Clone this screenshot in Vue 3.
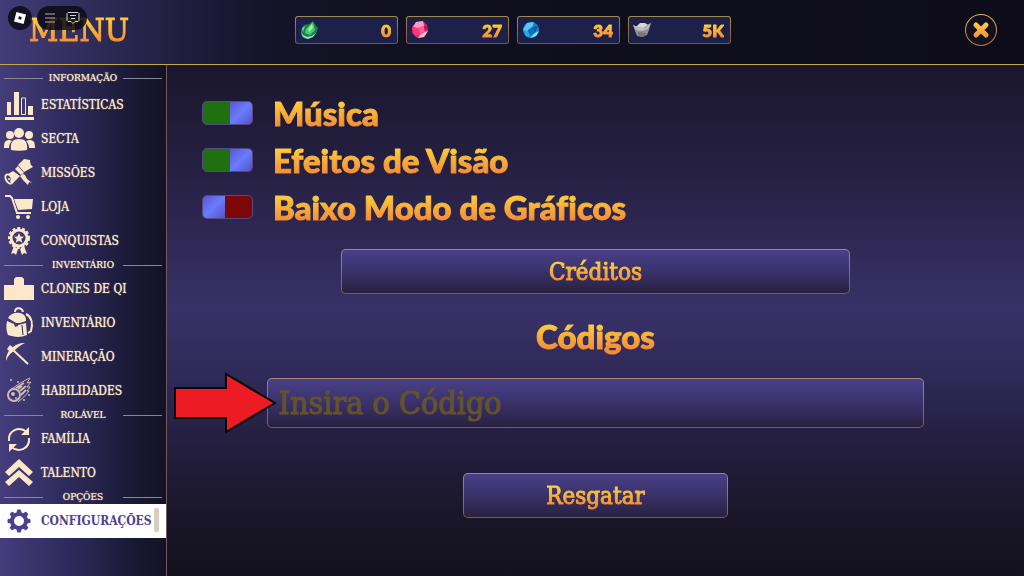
<template>
  <div class="game-menu">
    <header class="topbar">
      <h1 class="title gold">MENU</h1>

      <ul class="currencies">
        <li v-for="c in currencies" :key="c.id" class="currency">
          <svg v-if="c.id === 'jade'" width="20" height="20" viewBox="0 0 20 20">
            <path d="M2 10l3-5 5-1 4-3 3 5 2 2-2 6-5 4-6 1-4-4z" fill="#1c7f55" />
            <path d="M7 9l7-7 2 8-5 5-5-2z" fill="#3fce6d" />
            <path d="M9 9l4-5 1 4-4 4z" fill="#a8f58d" />
            <path d="M2 12l2 3 4 2 5-1 4-3-3 4-5 2-5-2z" fill="#a5e0c9" />
            <path d="M3 8l3-2-2 6z" fill="#69d6a4" />
          </svg>
          <svg v-else-if="c.id === 'ruby'" width="20" height="20" viewBox="0 0 20 20">
            <path d="M6 2l7-1 4 4 1 6-4 6-7 1-5-5V7z" fill="#e0246d" />
            <path d="M6 2l7-1 1 5-6 2-5-1z" fill="#ff9dbd" />
            <path d="M8 8l6-2 1 6-5 3z" fill="#ff5b93" />
            <path d="M2 8h6l2 7-5 1z" fill="#f43c7e" />
            <path d="M10 15l5-3 3-1-4 6-6 1z" fill="#ffc0d2" />
            <path d="M14 6l4 1-3 4z" fill="#b80f51" />
          </svg>
          <svg v-else-if="c.id === 'sapphire'" width="20" height="20" viewBox="0 0 20 20">
            <circle cx="10" cy="10" r="8" fill="#1686cf" />
            <path d="M6 3l7-1-2 6-5 3-4-1z" fill="#59c8f5" />
            <path d="M11 7l6-1-3 7z" fill="#0b5ba6" />
            <path d="M2 10l5 1 2 6-4-1z" fill="#2aa9ea" />
            <path d="M9 18l5-5 4-2-3 5z" fill="#8fe0ff" />
            <path d="M7 10l4-3 2 6-4 2z" fill="#0f6ebc" />
          </svg>
          <svg v-else width="20" height="20" viewBox="0 0 20 20">
            <path d="M1 5l5 2 8-2 5-2-2 7-2 5-5 2-5-1-2-5z" fill="#8f8f92" />
            <path d="M4 7l4-4h5l3 2-5 3z" fill="#d9d7d2" />
            <path d="M1 5l6 3h6l6-5-3 6-6 2-6-1z" fill="#bdbcbc" />
            <path d="M6 12l8 1-1 3-4 1-3-2z" fill="#77777b" />
          </svg>
          <span class="amount gold">{{ c.amount }}</span>
        </li>
      </ul>

      <button class="close" type="button" aria-label="Fechar">
        <svg width="18" height="18" viewBox="0 0 18 18">
          <defs>
            <linearGradient id="closeFill" gradientUnits="userSpaceOnUse" x1="0" y1="0" x2="0" y2="18">
              <stop offset="0" stop-color="#ffd24a" />
              <stop offset="1" stop-color="#f58a3a" />
            </linearGradient>
          </defs>
          <path d="M4 4l10 10M14 4L4 14" stroke="url(#closeFill)" stroke-width="5" stroke-linecap="round" />
        </svg>
      </button>

      <!-- platform buttons float over the title -->
      <div class="platform">
        <button class="platform-logo" type="button" aria-label="Roblox">
          <svg width="14" height="14" viewBox="0 0 14 14">
            <path fill-rule="evenodd" d="M3.4 1L13 3.4 10.6 13 1 10.600zM5.900 5.300L5.300 8.100 8.100 8.700 8.700 5.900z" fill="#fff" />
          </svg>
        </button>
        <div class="platform-pill">
          <button type="button" aria-label="Menu">
            <svg width="12" height="12" viewBox="0 0 12 12">
              <path d="M1 2h10M1 6h10M1 10h10" stroke="#b4adb0" />
            </svg>
          </button>
          <button type="button" aria-label="Chat">
            <svg width="14" height="14" viewBox="0 0 14 14" fill="none" stroke="#d6d0d2">
              <path d="M2 1.500h10l1 1v7l-1 1H9l-2 2-2-2H2l-1-1v-7z" />
              <path d="M4 4.500h6M5 7.500h4" />
            </svg>
          </button>
        </div>
      </div>
    </header>

    <nav class="sidebar">
      <section v-for="group in groups" :key="group.label" class="group">
        <h2>{{ group.label }}</h2>
        <a
          v-for="item in group.items"
          :key="item.icon"
          href="#"
          class="item"
          :class="{ active: active === item.icon }"
          @click.prevent="active = item.icon"
        >
          <svg class="icon" viewBox="0 0 32 32">
            <g v-if="item.icon === 'stats'">
              <path d="M4 13h4v13H4zM11 3h5v23h-5zM25 17h5v9h-5zM2 28h29v3H2z" />
              <path d="M18.500 9h4v16.500h-4z" class="line" />
            </g>
            <g v-else-if="item.icon === 'sect'">
              <circle cx="16" cy="10" r="5" />
              <circle cx="7" cy="12" r="4" />
              <circle cx="26" cy="12" r="4" />
              <path d="M8 27c-1-8 2-11 8-11s9 3 8 11c-5 1-11 1-16 0z" />
              <path d="M1 25c0-6 1-8 6-8l2 1c-2 2-3 4-3 7zM32 25c0-6-1-8-6-8l-3 1c2 2 3 4 3 7z" />
            </g>
            <g v-else-if="item.icon === 'missions'">
              <path d="M21 2l6 1c0 4 1 5 3 7l-9 5-6-7z" />
              <path d="M15 9l6 7-3 2-6-6z" />
              <path d="M10 14l7 5-7 7-3-1 1-5-3-3z" />
              <path d="M20 17l2 1 2 4 5 4-3-1-1 3-5-5-3-4z" />
              <ellipse cx="6" cy="22" rx="3" ry="5" class="line" stroke-width="2" transform="rotate(-30 6 22)" />
              <circle cx="6" cy="22" r="1" />
            </g>
            <g v-else-if="item.icon === 'shop'">
              <path d="M2 5h5l2 2 5 15h14" class="stroke" />
              <path d="M11 8h19l-1 10-14 1z" />
              <circle cx="15" cy="26" r="2" />
              <circle cx="25" cy="26" r="2" />
            </g>
            <g v-else-if="item.icon === 'awards'">
              <path d="M11 21l4 3-2 6-2-2-3 1zM21 21l-4 3 2 6 2-2 3 1z" />
              <circle cx="16" cy="13" r="10" fill="none" stroke="currentColor" stroke-width="2" stroke-dasharray="3 2" />
              <circle cx="16" cy="13" r="8" fill="none" stroke="currentColor" stroke-width="3" />
              <path d="M16 8l1.500 3.500 3.500.3-2.700 2.300.9 3.600L16 15.800l-3.200 1.900.9-3.600L11 11.800l3.500-.3z" />
            </g>
            <g v-else-if="item.icon === 'clones'">
              <path d="M1 12h10V6l2-2h6l2 2v6h10v15H1z" />
            </g>
            <g v-else-if="item.icon === 'bag'">
              <path d="M12 5c0-5 7-5 8 0" class="line" stroke-width="2" />
              <path d="M5 11c2-4 7-6 12-5 4 1 6 3 6 8l-6 2-4 0z" />
              <path d="M4 14l7 3 1 3 3-1v-1l8-2 1 12c-7 3-13 2-19 0-2-5-2-9-1-14z" />
              <path d="M23 7c6 3 7 10 5 17l-3 2" class="line" stroke-width="2" />
              <path d="M19 18l1 10" stroke="#2e2a5c" />
            </g>
            <g v-else-if="item.icon === 'mining'">
              <path d="M10 9l15 14" class="stroke" />
              <path d="M22 2C16 2 12 4 9 7 5 10 3 14 3 20c2-5 4-8 8-10 3-3 6-6 11-8z" />
              <path d="M7 4l5 4-4 4-4-4z" />
            </g>
            <g v-else-if="item.icon === 'skills'" class="faint">
              <path d="M7 15C16 9 20 6 27 3l-3 5 4-1-4 5h3l-3 4h2c-3 4-7 8-11 11" class="line" />
              <circle cx="11" cy="20" r="6" class="line" stroke-width="2" />
              <circle cx="10" cy="19" r="2" />
              <circle cx="13" cy="23" r="1" />
              <path d="M13 13l8-5M17 16l6-5M18 20l5-5M15 14l4-3" class="line" stroke-width="2" />
              <circle cx="8" cy="5" r="1" />
              <circle cx="15" cy="7" r="1" />
              <circle cx="26" cy="20" r="1" />
              <circle cx="21" cy="25" r="1" />
            </g>
            <g v-else-if="item.icon === 'family'">
              <path d="M6 18C5 7 16 3 24 9M26 15c1 11-10 15-18 9" class="stroke" />
              <path d="M26 4v8h-8zM6 29v-8h8z" />
            </g>
            <g v-else-if="item.icon === 'talent'">
              <path d="M16 2l14 13-4 4-10-9-10 9-4-4z" />
              <path d="M16 13l14 12-4 4-10-9-10 9-4-4z" />
            </g>
            <g v-else>
              <circle cx="16" cy="16" r="7" fill="none" stroke="currentColor" stroke-width="4" />
              <path
                v-for="n in 8"
                :key="n"
                d="M14 8l.5-3h3l.5 3z"
                stroke="currentColor"
                stroke-linejoin="round"
                :transform="`rotate(${n * 45} 16 16)`"
              />
            </g>
          </svg>
          <span>{{ item.label }}</span>
        </a>
      </section>
      <span class="scroll-thumb"></span>
    </nav>

    <main class="settings">
      <div class="toggles">
        <label v-for="t in toggles" :key="t.label" class="toggle">
          <input v-model="t.on" type="checkbox" />
          <span class="heading gold">{{ t.label }}</span>
        </label>
      </div>

      <button class="panel credits" type="button"><span class="gold">Créditos</span></button>

      <label class="heading codes" for="code"><span class="gold">Códigos</span></label>
      <div class="code-row">
        <input id="code" v-model="code" class="panel" type="text" placeholder="Insira o Código" />
        <svg class="arrow" width="104" height="64" viewBox="0 0 104 64">
          <path d="M2 17h51V3l49 29-49 29V47H2z" fill="#ed1c24" stroke="#0c0508" stroke-width="2" />
        </svg>
      </div>

      <button class="panel redeem" type="button"><span class="gold">Resgatar</span></button>
    </main>
  </div>
</template>

<script setup>
import { ref } from 'vue';

const active = ref('settings');
const code = ref('');

const currencies = [
  { id: 'jade', amount: '0' },
  { id: 'ruby', amount: '27' },
  { id: 'sapphire', amount: '34' },
  { id: 'silver', amount: '5K' },
];

const toggles = ref([
  { label: 'Música', on: true },
  { label: 'Efeitos de Visão', on: true },
  { label: 'Baixo Modo de Gráficos', on: false },
]);

const groups = [
  {
    label: 'INFORMAÇÃO',
    items: [
      { icon: 'stats', label: 'ESTATÍSTICAS' },
      { icon: 'sect', label: 'SECTA' },
      { icon: 'missions', label: 'MISSÕES' },
      { icon: 'shop', label: 'LOJA' },
      { icon: 'awards', label: 'CONQUISTAS' },
    ],
  },
  {
    label: 'INVENTÁRIO',
    items: [
      { icon: 'clones', label: 'CLONES DE QI' },
      { icon: 'bag', label: 'INVENTÁRIO' },
      { icon: 'mining', label: 'MINERAÇÃO' },
      { icon: 'skills', label: 'HABILIDADES' },
    ],
  },
  {
    label: 'ROLÁVEL',
    items: [
      { icon: 'family', label: 'FAMÍLIA' },
      { icon: 'talent', label: 'TALENTO' },
    ],
  },
  {
    label: 'OPÇÕES',
    items: [{ icon: 'settings', label: 'CONFIGURAÇÕES' }],
  },
];
</script>

<style>
body {
  margin: 0;
  background: #14111f;
}
</style>

<style scoped>
.game-menu {
  display: grid;
  grid-template-columns: 167px 1fr;
  grid-template-rows: 65px 1fr;
  min-height: 100vh;
  font-family: 'DejaVu Serif Condensed', 'DejaVu Serif', 'Liberation Serif', serif;
  font-variant-ligatures: none;
  color: #fbe8c8;
}

button {
  padding: 0;
  border: 0;
  background: none;
  font-family: inherit;
  cursor: pointer;
}

/* the transparent stroke thickens the clipped gradient */
.gold {
  color: transparent;
  background: linear-gradient(#ffd43a 15%, #f58b38 85%);
  -webkit-background-clip: text;
  background-clip: text;
  -webkit-text-stroke: 1px transparent;
}

/* Top bar */
.topbar {
  position: relative;
  grid-column: 1 / -1;
  display: grid;
  grid-template-columns: 1fr auto 1fr;
  align-items: center;
  box-sizing: border-box;
  padding: 0 27px 4px 29px;
  border-bottom: 1px solid #c2a94a;
  background: linear-gradient(90deg, #433c78, #29264f 12%, #15142a 25%, #100f1d 45%, #0d0c18);
}

.title {
  justify-self: start;
  margin: 0;
  font-size: 32px;
  line-height: 40px;
  font-weight: 400;
}

.currencies {
  display: flex;
  gap: 8px;
  margin: 0;
  padding: 0;
  list-style: none;
}

.currency {
  display: flex;
  align-items: center;
  justify-content: space-between;
  box-sizing: border-box;
  width: 103px;
  height: 28px;
  padding: 0 6px 0 3px;
  border: 1px solid transparent;
  border-radius: 3px;
  background:
    linear-gradient(#1d2049, #1d2049) padding-box,
    linear-gradient(#a08c55, #7d5048) border-box;
}

.amount {
  font-family: Lato, sans-serif;
  font-size: 17px;
  font-weight: 900;
}

.close {
  justify-self: end;
  display: flex;
  align-items: center;
  justify-content: center;
  width: 32px;
  height: 32px;
  border: 1px solid transparent;
  border-radius: 50%;
  background:
    linear-gradient(#11101e, #11101e) padding-box,
    linear-gradient(#e0bd5b, #c06a45) border-box;
}

.platform {
  position: absolute;
  top: 6px;
  left: 8px;
  display: flex;
  gap: 5px;
}

.platform-logo,
.platform-pill {
  display: flex;
  align-items: center;
  justify-content: center;
  height: 24px;
  border-radius: 12px;
  background: rgba(12, 11, 20, 0.85);
}

.platform-logo {
  width: 24px;
}

.platform-pill {
  gap: 10px;
  width: 50px;
}

.platform-pill button {
  display: flex;
}

/* Sidebar */
.sidebar {
  position: relative;
  padding-top: 6px;
  border-right: 1px solid #6d5d5c;
  background: linear-gradient(90deg, #453d7c, #2c2858 45%, #181730 85%, #131225);
}

.group h2 {
  display: flex;
  align-items: center;
  justify-content: space-between;
  height: 14px;
  margin: 0;
  padding: 0 4px;
  font-size: 10px;
  line-height: 14px;
  font-weight: 400;
  text-shadow: 0 0 1px currentColor;
}

.group:first-child h2 {
  padding-bottom: 3px;
}

.group h2::before,
.group h2::after {
  content: '';
  width: 39px;
  height: 1px;
  background: #8c8496;
}

.item {
  display: flex;
  align-items: center;
  gap: 6px;
  height: 34px;
  padding-left: 3px;
  font-size: 12px;
  color: #fbe8c8;
  text-decoration: none;
  text-shadow: 0 0 1px currentColor;
}

.item.active {
  background: #fff;
  color: #4b4190;
  font-weight: 700;
  text-shadow: none;
}

.icon {
  flex: none;
  width: 32px;
  height: 32px;
  fill: currentColor;
}

.icon .line {
  fill: none;
  stroke: currentColor;
}

.icon .stroke {
  fill: none;
  stroke: currentColor;
  stroke-width: 2;
}

.icon .faint {
  opacity: 0.75;
}

.scroll-thumb {
  position: absolute;
  top: 443px;
  right: 7px;
  width: 5px;
  height: 24px;
  border-radius: 2px;
  background: #d9cdbd;
}

/* Settings */
.settings {
  display: flex;
  flex-direction: column;
  align-items: center;
  padding: 30px 0 40px;
  background: linear-gradient(#1a162c, #252042 20%, #302956 35%, #383168 48%, #2f2a58 60%, #231e3d 75%, #171424 92%, #14111f);
}

.toggles {
  display: flex;
  flex-direction: column;
  align-self: stretch;
  gap: 11px;
  padding-left: 35px;
}

.toggle {
  display: flex;
  align-items: center;
  align-self: flex-start;
  gap: 20px;
  height: 36px;
  cursor: pointer;
}

.toggle input {
  appearance: none;
  flex: none;
  width: 51px;
  height: 24px;
  margin: 0;
  border: 1px solid #514a86;
  border-radius: 5px;
  background:
    linear-gradient(135deg, #5a55cf, #6a7cff 50%, #5650c4) left / 22px 100% no-repeat,
    #7d0606;
  cursor: pointer;
}

.toggle input:checked {
  background:
    linear-gradient(135deg, #5a55cf, #6a7cff 50%, #5650c4) right / 22px 100% no-repeat,
    #21700f;
}

.heading {
  font-family: Lato, sans-serif;
  font-size: 33px;
  line-height: 40px;
  font-weight: 900;
}

.panel {
  box-sizing: border-box;
  height: 45px;
  border: 1px solid transparent;
  border-radius: 5px;
  background:
    linear-gradient(#4a4088, #3b336d 45%, #28213f) padding-box,
    linear-gradient(#a08a78, #85584c) border-box;
  font-size: 24px;
}

.credits {
  width: 59.3%;
  margin-top: 24px;
}

.codes {
  margin: 22px 0;
}

.code-row {
  position: relative;
  width: 76.6%;
}

.code-row input {
  display: block;
  width: 100%;
  height: 50px;
  padding: 0 10px;
  font-family: inherit;
  font-size: 32px;
  color: #f7b03a;
}

.code-row input::placeholder {
  color: #66522a;
  opacity: 1;
  -webkit-text-stroke: 1px #66522a;
}

.arrow {
  position: absolute;
  top: -7px;
  right: calc(100% - 10px);
}

.redeem {
  width: 31%;
  margin-top: 45px;
}
</style>
